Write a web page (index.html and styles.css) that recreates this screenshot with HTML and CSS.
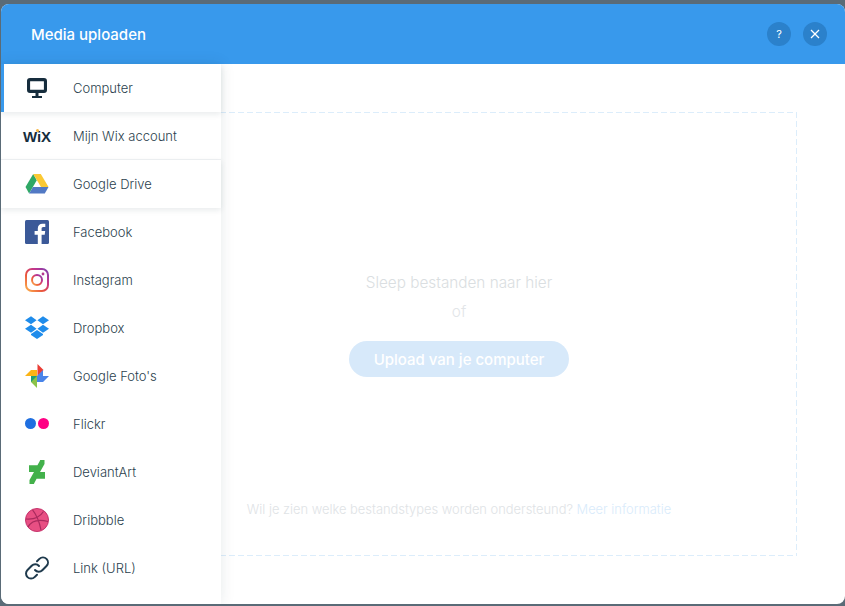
FILE: index.html
```html
<!DOCTYPE html>
<html>
<head>
    <title>Media uploaden</title>
    <link rel="stylesheet" href="styles.css">
</head>
<body>
    <div class="dialog">
        <div class="header">
            <h1>Media uploaden</h1>
            <div class="header-buttons">
                <span class="round-btn">?</span>
                <span class="round-btn">
                    <svg width="10" height="10" viewBox="0 0 10 10" fill="none" stroke="#fff" stroke-width="1.2"><line x1="1" y1="1" x2="9" y2="9"></line><line x1="9" y1="1" x2="1" y2="9"></line></svg>
                </span>
            </div>
        </div>
        <div class="main">
            <ul class="sidebar">
                <li class="item raised active">
                    <span class="icon">
                        <svg width="24" height="24" viewBox="0 0 24 24"><path fill="#162d3d" fill-rule="evenodd" d="M5 2h14a3 3 0 0 1 3 3v9a3 3 0 0 1-3 3h-5.500v3H17v2H7v-2h3.500v-3H5a3 3 0 0 1-3-3V5a3 3 0 0 1 3-3zm.3 3.200a.3.3 0 0 0-.2.2v8.200a.3.3 0 0 0 .2.2h13.400a.3.3 0 0 0 .2-.2V5.400a.3.3 0 0 0-.2-.2z"></path></svg>
                    </span>
                    Computer
                </li>
                <li class="item middle">
                    <span class="icon wix-logo">WiX</span>
                    Mijn Wix account
                </li>
                <li class="item raised">
                    <span class="icon">
                        <svg width="24" height="22" viewBox="0 0 24 22"><path fill="#2fa866" d="M8.200 1 0.500 14l3.600 6.500 7.700-13.200z"></path><path fill="#fbc934" d="M8.200 1h7.600l7.700 13h-7.500z"></path><path fill="#5279c4" d="M8 14h15.500l-3.700 6.500H4.100z"></path></svg>
                    </span>
                    Google Drive
                </li>
                <li class="item">
                    <span class="icon">
                        <svg width="24" height="24" viewBox="0 0 24 24"><rect width="24" height="24" rx="1.500" fill="#3b5998"></rect><path fill="#fff" d="M16.600 24v-9.300h3.100l.5-3.600h-3.600V8.800c0-1 .3-1.800 1.800-1.800h1.900V3.800c-.3 0-1.500-.1-2.800-.1-2.800 0-4.700 1.700-4.700 4.800v2.600H9.600v3.600h3.200V24z"></path></svg>
                    </span>
                    Facebook
                </li>
                <li class="item">
                    <span class="icon">
                        <svg width="24" height="24" viewBox="0 0 24 24" fill="none">
                            <defs>
                                <linearGradient id="insta" x1="0" y1="1" x2="1" y2="0">
                                    <stop offset="0" stop-color="#fdb04a"></stop>
                                    <stop offset="0.4" stop-color="#e8513f"></stop>
                                    <stop offset="0.7" stop-color="#c1358f"></stop>
                                    <stop offset="1" stop-color="#7a3fae"></stop>
                                </linearGradient>
                            </defs>
                            <rect x="1" y="1" width="22" height="22" rx="6" stroke="url(#insta)" stroke-width="2"></rect>
                            <circle cx="12" cy="12" r="5" stroke="url(#insta)" stroke-width="2"></circle>
                            <circle cx="18" cy="6" r="1.400" fill="#b5368f"></circle>
                        </svg>
                    </span>
                    Instagram
                </li>
                <li class="item">
                    <span class="icon">
                        <svg width="24" height="24" viewBox="0 0 24 24"><path fill="#1f8ceb" d="M0 4.200 6 .2l5.600 4-5.600 4zM12.400 4.200l5.600-4 6 4-6 4zM0 12.800l6-4 5.600 4-5.600 4zM12.400 12.800l5.600-4 6 4-6 4zM6 18l6-3.900 6 3.900v1l-6 4-6-4z"></path></svg>
                    </span>
                    Dropbox
                </li>
                <li class="item">
                    <span class="icon">
                        <svg width="24" height="24" viewBox="0 0 24 24"><path fill="#ea3d35" d="M12.500 0l6 6-6 6z"></path><path fill="#3f7de8" d="M12 12l6-6v6h6l-6 6h-6z" opacity="0.95"></path><path fill="#8bc34a" d="M12 12v12l-6-6v-6z"></path><path fill="#1e9e75" d="M6 12h6l-6 6z"></path><path fill="#fbb416" d="M0 12l6-6h6v6z"></path></svg>
                    </span>
                    Google Foto's
                </li>
                <li class="item">
                    <span class="icon flickr">
                        <span class="dot dot-blue"></span>
                        <span class="dot dot-pink"></span>
                    </span>
                    Flickr
                </li>
                <li class="item">
                    <span class="icon">
                        <svg width="16" height="24" viewBox="0 0 16 24"><path fill="#43b14b" d="M15.500 0h-4.300l-.8 1.700-2 3.500H0v6.700h5L0.500 20v4h4.400l.7-1.600 2-3.600h8.400v-6.700h-5l4.500-8.100z"></path></svg>
                    </span>
                    DeviantArt
                </li>
                <li class="item">
                    <span class="icon">
                        <svg width="24" height="24" viewBox="0 0 24 24" fill="none"><circle cx="12" cy="12" r="11.500" fill="#e84f83" stroke="#c4346c"></circle><path stroke="#a92a5d" stroke-width="1.200" d="M7.500 1.800C11 6 14 12 16 22M1 11c6 .5 13-.5 17.500-7.500M3 19c3-5.500 9-8.500 20-5.500"></path></svg>
                    </span>
                    Dribbble
                </li>
                <li class="item">
                    <span class="icon">
                        <svg width="24" height="24" viewBox="0 0 24 24" fill="none" stroke="#1f3a4d" stroke-width="2" stroke-linecap="round"><path d="M10 14a5 5 0 0 0 7.300.2l4.200-4.200a5 5 0 0 0-7.100-7.100l-2.400 2.400"></path><path d="M14 10a5 5 0 0 0-7.300-.2l-4.200 4.200a5 5 0 0 0 7.100 7.100l2.400-2.400"></path></svg>
                    </span>
                    Link (URL)
                </li>
            </ul>
            <div class="content">
                <div class="dropzone">
                    <p class="drop-title">Sleep bestanden naar hier</p>
                    <p class="drop-or">of</p>
                    <button class="upload-btn">Upload van je computer</button>
                    <p class="drop-info">Wil je zien welke bestandstypes worden ondersteund? <a href="#">Meer informatie</a></p>
                </div>
            </div>
        </div>
    </div>
</body>
</html>
```

FILE: styles.css
```css
* {
    box-sizing: border-box;
}

html, body {
    height: 100%;
}

body {
    margin: 0;
    padding: 4px 0 2px 1px;
    overflow: hidden;
    background-color: #5a6b77;
    font-family: Inter, "Liberation Sans", Arial, sans-serif;
    font-weight: 300;
}

.dialog {
    display: flex;
    flex-direction: column;
    height: 600px;
    background-color: #fff;
    border-radius: 8px;
    overflow: hidden;
}

.header {
    flex: none;
    display: flex;
    justify-content: space-between;
    align-items: center;
    height: 60px;
    padding: 1px 18px 0 30px;
    background-color: #3899ec;
}

h1 {
    margin: 0;
    font-size: 15px;
    font-weight: 500;
    color: #fff;
}

.header-buttons {
    display: flex;
    gap: 12px;
    margin-top: -1px;
}

.round-btn {
    display: flex;
    justify-content: center;
    align-items: center;
    width: 24px;
    height: 24px;
    border-radius: 50%;
    background-color: #2b81cb;
    color: #fff;
    font-size: 11px;
    font-weight: 400;
}

.main {
    flex: 1;
    display: flex;
    min-height: 0;
}

.sidebar {
    flex: none;
    width: 220px;
    margin: 0;
    padding: 0;
    list-style-type: none;
    background-color: #fff;
    box-shadow: 0px 0px 14px rgba(22, 45, 61, 0.1);
    position: relative;
    z-index: 1;
}

.item {
    display: flex;
    align-items: center;
    height: 48px;
    padding-left: 72px;
    position: relative;
    font-size: 13px;
    color: #2b3f4e;
    background-color: #fff;
}

.item.raised {
    box-shadow: 0px 2px 6px rgba(22, 45, 61, 0.1);
    z-index: 1;
}

.item.middle {
    border-bottom: 1px solid #f0f2f4;
}

.item.active {
    border-left: 3px solid #3899ec;
    padding-left: 69px;
}

.item.active .icon {
    left: 21px;
}

.icon {
    position: absolute;
    left: 24px;
    top: 0;
    width: 24px;
    height: 48px;
    display: flex;
    justify-content: center;
    align-items: center;
}

.wix-logo {
    font-family: "Liberation Sans", Arial, sans-serif;
    font-size: 15px;
    font-weight: bold;
    color: #162d3d;
}

.wix-logo::after {
    content: "";
    position: absolute;
    left: 11px;
    top: 17px;
    width: 3px;
    height: 3px;
    border-radius: 50%;
    background-color: #f5b53f;
}

.flickr {
    gap: 2px;
    padding-bottom: 1px;
}

.dot {
    flex: none;
    width: 11px;
    height: 11px;
    border-radius: 50%;
}

.dot-blue {
    background-color: #1f6fe0;
}

.dot-pink {
    background-color: #ff0084;
}

.content {
    flex: 1;
    padding: 48px 48px 48px 0;
}

/* border drawn as gradients, a dashed border has too short dashes */
.dropzone {
    display: flex;
    flex-direction: column;
    align-items: center;
    height: 100%;
    margin-left: -100px;
    padding-top: 161px;
    background-image:
        repeating-linear-gradient(90deg, #dcedfb 0 6px, transparent 6px 9px),
        repeating-linear-gradient(90deg, #dcedfb 0 6px, transparent 6px 9px),
        repeating-linear-gradient(180deg, #dcedfb 0 6px, transparent 6px 9px);
    background-size: 100% 1px, 100% 1px, 1px 100%;
    background-position: left top, left bottom, right top;
    background-repeat: no-repeat;
}

.drop-title {
    margin: 0;
    font-size: 15.3px;
    line-height: 20px;
    color: #dadee1;
}

.drop-or {
    margin: 9px 0 0;
    font-size: 15.3px;
    line-height: 20px;
    color: #e2e5e8;
}

.upload-btn {
    width: 220px;
    height: 36px;
    margin-top: 19px;
    border: none;
    border-radius: 18px;
    background-color: #d7e9fa;
    color: #fff;
    font-family: inherit;
    font-size: 15px;
    font-weight: 500;
}

.drop-info {
    margin: 124px 0 0;
    font-size: 12.9px;
    line-height: 18px;
    color: #e0e3e6;
}

.drop-info a {
    color: #d9ebfb;
    text-decoration: none;
}
```
